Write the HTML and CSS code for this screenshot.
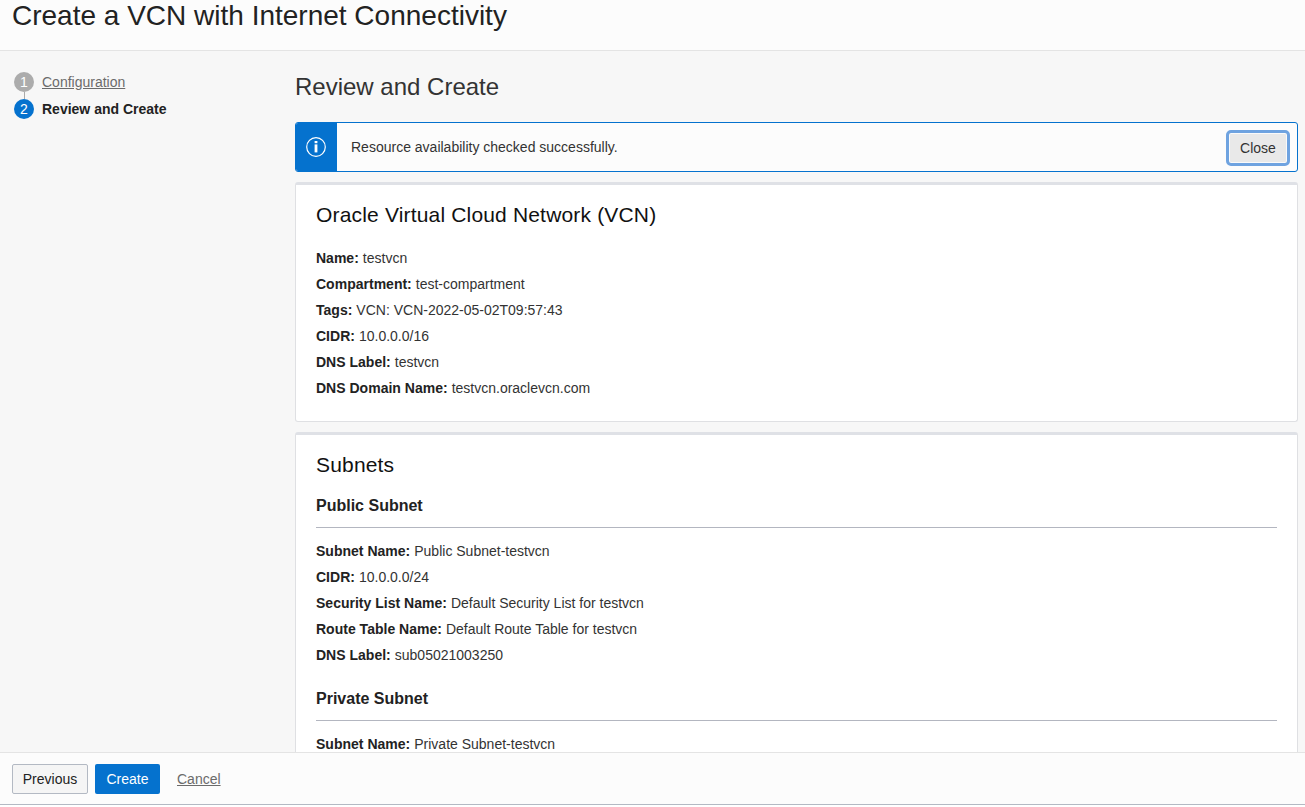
FILE: index.html
```html
<!DOCTYPE html>
<html lang="en">
<head>
<meta charset="utf-8">
<title>Create a VCN with Internet Connectivity</title>
<link rel="stylesheet" href="styles.css">
</head>
<body>
<div class="wizard">
  <header class="header"><h1 class="title">Create a VCN with Internet Connectivity</h1></header>
  <div class="body">
    <nav class="steps">
      <div class="step"><span class="badge">1</span><a class="step-link">Configuration</a></div>
      <div class="connector"></div>
      <div class="step current"><span class="badge">2</span><span class="step-name">Review and Create</span></div>
    </nav>
    <main class="content">
      <h2 class="page-title">Review and Create</h2>
      <div class="alert">
        <div class="alert-icon">
          <svg width="20" height="20" viewBox="0 0 20 20"><circle cx="10" cy="10" r="9.3" fill="none" stroke="#fff" stroke-width="1.2"/><rect x="8.6" y="4" width="2.8" height="2.2" fill="#fff"/><rect x="8.6" y="7.4" width="2.8" height="8" fill="#fff"/></svg>
        </div>
        <p class="alert-text">Resource availability checked successfully.</p>
        <button class="close">Close</button>
      </div>
      <section class="card vcn">
        <h3 class="card-title">Oracle Virtual Cloud Network (VCN)</h3>
        <dl class="fields">
          <div class="field"><dt>Name:</dt><dd>testvcn</dd></div>
          <div class="field"><dt>Compartment:</dt><dd>test-compartment</dd></div>
          <div class="field"><dt>Tags:</dt><dd>VCN: VCN-2022-05-02T09:57:43</dd></div>
          <div class="field"><dt>CIDR:</dt><dd>10.0.0.0/16</dd></div>
          <div class="field"><dt>DNS Label:</dt><dd>testvcn</dd></div>
          <div class="field"><dt>DNS Domain Name:</dt><dd>testvcn.oraclevcn.com</dd></div>
        </dl>
      </section>
      <section class="card">
        <h3 class="card-title">Subnets</h3>
        <h4 class="subnet-title">Public Subnet</h4>
        <dl class="fields">
          <div class="field"><dt>Subnet Name:</dt><dd>Public Subnet-testvcn</dd></div>
          <div class="field"><dt>CIDR:</dt><dd>10.0.0.0/24</dd></div>
          <div class="field"><dt>Security List Name:</dt><dd>Default Security List for testvcn</dd></div>
          <div class="field"><dt>Route Table Name:</dt><dd>Default Route Table for testvcn</dd></div>
          <div class="field"><dt>DNS Label:</dt><dd>sub05021003250</dd></div>
        </dl>
        <h4 class="subnet-title">Private Subnet</h4>
        <dl class="fields">
          <div class="field"><dt>Subnet Name:</dt><dd>Private Subnet-testvcn</dd></div>
        </dl>
      </section>
    </main>
  </div>
  <footer class="footer">
    <button class="btn previous">Previous</button>
    <button class="btn create">Create</button>
    <a class="cancel">Cancel</a>
  </footer>
</div>
</body>
</html>
```
FILE: styles.css
```css
* { box-sizing: border-box; }
body, h1, h2, h3, h4, p, dl, dd { margin: 0; }
body { font: 14px/20px "Liberation Sans", Arial, sans-serif; color: #333; background: #fff; overflow: hidden; }
button { font: inherit; padding: 0; }
.wizard { display: flex; flex-direction: column; height: 805px; border-bottom: 1px solid #b3b9c3; }
.header { flex: none; height: 51px; padding-left: 12px; background: #fcfcfc; border-bottom: 1px solid #e4e4e4; }
.title { font-size: 28px; line-height: 32px; font-weight: 400; color: #222; white-space: nowrap; }
.body { flex: 1; min-height: 0; display: flex; overflow: hidden; background: #f7f7f7; }
.steps { flex: none; width: 295px; padding: 21px 0 0 14px; }
.step { display: flex; align-items: center; gap: 8px; height: 20px; }
.badge { width: 20px; height: 20px; border-radius: 50%; background: #acacac; color: #fff; text-align: center; }
.step-link, .cancel { color: #6b6b6b; text-decoration: underline; }
.connector { width: 1px; height: 7px; margin-left: 10px; background: #aaa; }
.current { font-weight: 700; color: #222; }
.current .badge { background: #0572ce; font-weight: 400; }
.content { flex: none; width: 1003px; padding-top: 20px; }
.page-title { font-size: 24px; line-height: 32px; font-weight: 400; margin-bottom: 19px; }
.alert { display: flex; align-items: center; height: 50px; border: 1px solid #0572ce; border-radius: 3px; background: #fcfcfc; overflow: hidden; padding-right: 7px; }
.alert-icon { width: 41px; height: 48px; display: flex; align-items: center; padding-left: 10px; background: #0572ce; }
.alert-text { flex: 1; padding-left: 14px; }
.close { width: 64px; height: 36px; margin-top: 2px; border: 3px solid #6fa3e0; border-radius: 5px; background: #e9e9e9; color: #333; box-shadow: inset 0 0 0 1px #fafafa; }
.card { margin-top: 10px; padding: 17px 20px 20px; background: #fff; border: 1px solid #dfe0e3; border-top: 3px solid #dfe1e6; border-radius: 3px; }
.vcn { height: 240px; }
.card-title { font-size: 21px; line-height: 26px; font-weight: 400; color: #111; margin-bottom: 17px; letter-spacing: .17px; }
.field { display: flex; gap: 4px; height: 26px; line-height: 26px; }
dt { font-weight: 700; color: #222; letter-spacing: .01px; }
.subnet-title { height: 33px; font-size: 16px; line-height: 22px; color: #222; border-bottom: 1px solid #b3b6c0; margin-bottom: 10px; }
.fields + .subnet-title { margin-top: 20px; }
.footer { flex: none; height: 52px; display: flex; align-items: center; padding: 1px 0 0 12px; background: #fcfcfc; border-top: 1px solid #e4e4e4; }
.btn { height: 30px; border-radius: 2px; }
.previous { width: 76px; border: 1px solid #b3b9c3; background: #f5f5f5; color: #222; margin-right: 7px; }
.create { width: 65px; border: 0; background: #0572ce; color: #fff; margin-right: 17px; }
```
